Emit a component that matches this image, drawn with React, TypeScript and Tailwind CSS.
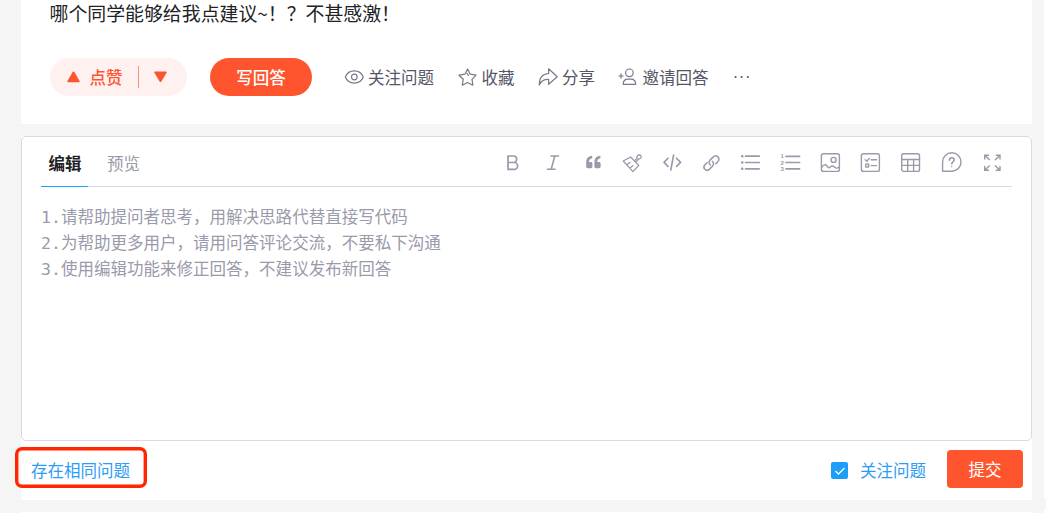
import React, { useState } from 'react';

interface IconProps {
  children: React.ReactNode;
  className?: string;
}

const Icon: React.FC<IconProps> = ({ children, className = '' }) => (
  <svg
    viewBox="0 0 20 20"
    fill="none"
    stroke="currentColor"
    strokeWidth="1.4"
    strokeLinecap="round"
    strokeLinejoin="round"
    className={`w-5 h-5 shrink-0 overflow-visible ${className}`}
  >
    {children}
  </svg>
);

const ACTIONS = [
  {
    label: '关注问题',
    icon: (
      <>
        <path d="M1.3 10C2.8 6.2 6 3.9 10.3 3.9s7.5 2.3 9 6.1c-1.5 3.8-4.7 6.1-9 6.1S2.8 13.8 1.3 10z" />
        <circle cx="10.3" cy="10" r="2.8" />
      </>
    ),
  },
  {
    label: '收藏',
    icon: (
      <>
        <path d="M10.6 2l2.7 5.2 5.7 1-4 4.1.9 5.9-5.3-2.7-5.3 2.7.9-5.9-4.2-4.1 5.9-1z" />
        <path d="M9.9 6.4l1.6 2" />
      </>
    ),
  },
  {
    label: '分享',
    icon: <path d="M10.6 1.8l8.6 8-8.6 7.5v-5c-4.6-.2-7.5 1.6-9.3 5.6C1.2 11 4.3 6.9 10.6 6.5z" />,
  },
  {
    label: '邀请回答',
    icon: (
      <>
        <circle cx="11.4" cy="5.8" r="3.8" />
        <path d="M5.2 17.4c0-3.2 2-5.2 4.8-5.2h2.8c2.9 0 4.9 2 4.9 5.2zM.8 9h4.4M3 6.8v4.4" />
      </>
    ),
  },
];

const TOOLS = [
  {
    name: 'bold',
    icon: <path strokeWidth="1.7" d="M6 4h5.4a3.2 3.2 0 0 1 0 6.5H6zM6 10.5h6.2a3.4 3.4 0 0 1 0 6.8H6z" />,
  },
  { name: 'italic', icon: <path strokeWidth="1.6" d="M9 4h7.5M5.5 17.3H13M12.8 4L9.2 17.3" /> },
  {
    name: 'quote',
    icon: (
      <path
        fill="currentColor"
        stroke="none"
        d="M10.2 3.8c-4.2.4-6 2.8-6 7.2v3.6c0 1 .6 1.6 1.6 1.6h3c1 0 1.6-.6 1.6-1.6v-3c0-1-.6-1.6-1.6-1.6H7c0-2 1-3.3 3.2-3.8zM18.4 3.8c-4.2.4-6 2.8-6 7.2v3.6c0 1 .6 1.6 1.6 1.6h3c1 0 1.6-.6 1.6-1.6v-3c0-1-.6-1.6-1.6-1.6h-1.8c0-2 1-3.3 3.2-3.8z"
      />
    ),
  },
  {
    name: 'clear',
    icon: (
      <path
        strokeWidth="1.3"
        d="M8.6 5L1.2 9l9.8 10.6 5.8-6.2zM4.8 12.8l3.2-2.4M7.9 16.2l3-2.6M12.4 9l2.6-2.6c-.4-1.7.5-3.2 1.9-3.4 1.8-.2 2.9 1.4 2.1 2.8-.4.8-1.3 1.2-2.2 1l-2.5 2.8"
      />
    ),
  },
  { name: 'code', icon: <path strokeWidth="1.6" d="M6 6.2L2 10.4l4 4M14.6 6.2l4 4.2-4 4M11.6 3L8.8 18" /> },
  {
    name: 'link',
    icon: (
      <path
        strokeWidth="1.5"
        d="M8.3 12.9c-1.7-1.6-1.6-3.5-.1-5l2.9-2.8c1.6-1.6 3.6-1.4 4.8-.2 1.3 1.3 1.3 3.3-.1 4.8l-2 2M10.3 9.2c1.7 1.6 1.6 3.6.1 5.1l-2.8 2.8c-1.6 1.5-3.5 1.5-4.8.2-1.2-1.3-1.2-3.2.3-4.8l2-2"
      />
    ),
  },
  {
    name: 'ul',
    icon: (
      <>
        <path strokeWidth="1.7" d="M3.6 4.2h13.6M3.6 10.5h13.6M3.6 16.8h13.6" />
        <path strokeWidth="2.6" d="M.2 4.2h.1M.2 10.5h.1M.2 16.8h.1" />
      </>
    ),
  },
  {
    name: 'ol',
    icon: (
      <>
        <path strokeWidth="1.7" d="M4 4.4h13.6M4 10.5h13.6M4 16.8h13.6" />
        <g fill="currentColor" stroke="none" fontSize="6" fontWeight="bold" fontFamily="Liberation Sans, sans-serif">
          <text x="-1.6" y="6.2">1</text>
          <text x="-1.6" y="12.6">2</text>
          <text x="-1.6" y="19">3</text>
        </g>
      </>
    ),
  },
  {
    name: 'image',
    icon: (
      <>
        <rect x="-.6" y="1.8" width="18" height="17.6" rx="2" />
        <circle cx="11.6" cy="7.9" r="2.5" />
        <path d="M-.4 15.4c2-3 3.8-3.4 5.2-1.6l1 1.2c1 1.2 1.8.8 2.8-.2 1.4-1.4 2.4-1.2 3.8.2 1.4 1.4 2.6 1.8 4.8.2" />
      </>
    ),
  },
  {
    name: 'tasks',
    icon: (
      <>
        <rect x="-.6" y="1.8" width="18" height="17.6" rx="2" />
        <path d="M3.2 7.8L4.8 9.2 7.3 6.6M9.2 7.8h5.4M9.2 13.6h5.4" />
        <rect x="3.7" y="12" width="3" height="3" rx=".8" />
      </>
    ),
  },
  {
    name: 'table',
    icon: (
      <>
        <rect x="-.3" y="1.8" width="17.8" height="17.6" rx="2" />
        <path d="M-.3 7.5h17.8M-.3 13.4h17.8M5.7 7.5v11.8M11.6 7.5v11.8" />
      </>
    ),
  },
  {
    name: 'help',
    icon: (
      <>
        <path d="M.6 19.2V10a9.2 9.2 0 1 1 9.2 9.2z" />
        <path strokeWidth="1.5" d="M7.4 8.2c0-3.3 4.8-3.2 4.8-.1 0 1.8-2.4 1.9-2.4 3.8M9.8 14.4v.1" />
      </>
    ),
  },
  {
    name: 'fullscreen',
    icon: (
      <path
        strokeLinecap="butt"
        strokeLinejoin="miter"
        d="M2.7 7.5V3.2H7M2.7 3.2l5 4.7M13.7 3.2H18v4.3M18 3.2l-5 4.7M2.7 14v4.3H7M2.7 18.3l5-4.7M13.7 18.3H18V14M18 18.3l-5-4.7"
      />
    ),
  },
];

const HINTS = [
  '请帮助提问者思考，用解决思路代替直接写代码',
  '为帮助更多用户，请用问答评论交流，不要私下沟通',
  '使用编辑功能来修正回答，不建议发布新回答',
];

const Question: React.FC = () => (
  <section className="bg-white h-[124px] pl-[29px]">
    <p className="h-[26px] leading-[26px] text-[18.9px] text-[#222226] -ml-[0.5px]">哪个同学能够给我点建议~！？不甚感激！</p>
    <div className="mt-8 h-[38px] flex items-center">
      <div className="w-[137px] h-[38px] -ml-[0.5px] rounded-full bg-[#fff1ef] text-[#fc5531] flex items-center pl-[17px] font-medium">
        <svg viewBox="0 0 13 12" className="w-[13px] h-3" fill="currentColor">
          <path d="M5.6 1.1a1.1 1.1 0 0 1 1.8 0l5.2 8.8c.4.7 0 1.3-.8 1.3H1.2c-.8 0-1.2-.6-.8-1.3z" />
        </svg>
        <span className="ml-[10px]">点赞</span>
        <span className="ml-[15px] w-px h-[22px] bg-[#fc5531]/60" />
        <svg viewBox="0 0 13 12" className="ml-[15px] w-[13px] h-3" fill="currentColor">
          <path d="M5.6 10.4a1.1 1.1 0 0 0 1.8 0l5.2-8.6c.4-.7 0-1.3-.8-1.3H1.2c-.8 0-1.2.6-.8 1.3z" />
        </svg>
      </div>
      <button className="ml-[23.5px] w-[102px] h-[38px] rounded-full bg-[#ff552e] text-white font-medium">写回答</button>
      <div className="ml-[31.5px] flex items-center gap-[23px] text-[#555666]">
        {ACTIONS.map((action) => (
          <button key={action.label} className="flex items-center gap-[4.5px]">
            <Icon className="text-[#77788a] [stroke-width:1.2]">{action.icon}</Icon>
            <span>{action.label}</span>
          </button>
        ))}
        <Icon>
          <path strokeWidth="2" d="M3.5 10h.1M9.6 10h.1M15.8 10h.1" />
        </Icon>
      </div>
    </div>
  </section>
);

const Editor: React.FC = () => {
  const [tab, setTab] = useState('编辑');

  return (
    <div className="h-[305px] border border-[#d9d9de] rounded-[5px] px-[19px] bg-white">
      <div className="h-[50px] flex items-stretch border-b border-[#d9d9de]">
        {['编辑', '预览'].map((name) => (
          <button
            key={name}
            onClick={() => setTab(name)}
            className={
              name === tab
                ? 'w-[47px] -mb-px pt-[4px] pl-[1px] border-b border-[#1f9ef7] font-bold text-[#222226]'
                : 'ml-[19px] w-[33px] pt-[4px] text-[#999aaa]'
            }
          >
            {name}
          </button>
        ))}
        <div className="ml-auto flex text-[#999aaa] pt-[15px]">
          {TOOLS.map((tool) => (
            <button key={tool.name} aria-label={tool.name} className="w-10 h-5 flex justify-center">
              <Icon>{tool.icon}</Icon>
            </button>
          ))}
        </div>
      </div>
      <ol className="pt-[18px] text-[#999aaa] text-[16.53px] leading-[26px] font-['DejaVu_Sans_Mono','Noto_Sans_CJK_SC',monospace]">
        {HINTS.map((hint, idx) => (
          <li key={hint} className="h-[26px] whitespace-nowrap">
            {idx + 1}.{hint}
          </li>
        ))}
      </ol>
    </div>
  );
};

const Footer: React.FC = () => {
  const [follow, setFollow] = useState(true);

  return (
    <div className="relative h-[59px] flex items-start pt-[9px] pl-[10px] pr-[9px]">
      <a className="h-[38px] leading-[40px] text-[#2b9df4]">存在相同问题</a>
      {/* Callout frame around the duplicate link */}
      <span className="absolute -left-[6px] top-[6px] w-[132px] h-[41px] rounded-[7px] shadow-[inset_0_0_0_3.4px_#ff2600]" />
      <label className="ml-auto h-[38px] flex items-center text-[#2b9df4]" onClick={() => setFollow(!follow)}>
        <span className="w-[17px] h-[17px] mt-[3px] rounded-[2px] bg-[#1f9ef7] text-white flex items-center justify-center">
          {follow && (
            <svg viewBox="0 0 12 12" className="w-3 h-3" fill="none" stroke="currentColor" strokeWidth="1.3">
              <path d="M1.5 6l3 3 6-6" />
            </svg>
          )}
        </span>
        <span className="ml-3 mt-[2px]">关注问题</span>
      </label>
      <button className="ml-[21px] w-[76px] h-[38px] rounded bg-[#ff552e] text-white">提交</button>
    </div>
  );
};

export default function App() {
  return (
    <div className="w-[1046px] h-[513px] overflow-hidden bg-[#f5f5f5] flex text-[16.5px] font-['Noto_Sans_CJK_SC',sans-serif]">
      <main className="ml-[21px] w-[1011px] flex flex-col">
        <Question />
        <section className="mt-3 h-[364px] bg-white">
          <Editor />
          <Footer />
        </section>
        <section className="mt-3 h-px bg-white" />
      </main>
      <aside className="ml-3 w-[2px] flex flex-col gap-3">
        <div className="h-[498px] bg-white" />
        <div className="h-[3px] bg-white" />
      </aside>
    </div>
  );
}
